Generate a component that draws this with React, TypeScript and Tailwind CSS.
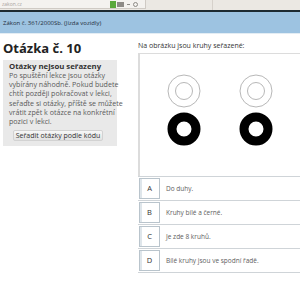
import React from "react";

const answers = [
  { l: "A", t: "Do duhy." },
  { l: "B", t: "Kruhy bílé a černé." },
  { l: "C", t: "Je zde 8 kruhů." },
  { l: "D", t: "Bílé kruhy jsou ve spodní řadě." },
];

export default function App() {
  return (
    <div className="w-[300px] h-[300px] overflow-hidden bg-white font-['Open_Sans',sans-serif] text-[#333] antialiased">
      {/* browser chrome */}
      <div className="h-[10px] bg-[#ebe8e3] flex items-stretch">
        <div className="w-[146px] h-[9px] bg-[#f4f2ef] border-b border-r border-[#cfcac4] flex items-center pl-[2px] relative">
          <span className="text-[5px] leading-none text-[#a9a49e]">zakon.cz</span>
          <div className="absolute left-[110px] top-[1px] w-[6px] h-[7px] bg-[#5aa83c]" />
          <div className="absolute left-[117px] top-[2px] w-[7px] h-[5px] bg-[#8d8a86]" />
          <div className="absolute left-[127px] top-[4px] w-[3px] h-px bg-[#8d8a86]" />
          <div className="absolute left-[133px] top-[2px] w-[5px] h-[5px] border border-[#8d8a86] rounded-full" />
        </div>
        <div className="w-[67px] border-r border-[#d6d1cb]" />
        <div className="flex-1" />
      </div>
      <div className="h-[2px] bg-[#1d2a31]" />
      <div className="h-[21px] bg-[#9dc3e1] flex items-center px-[3px]">
        <span className="text-[6px] text-[#1f2d3a] leading-none">Zákon č. 361/2000Sb. (Jízda vozidly)</span>
      </div>
      <div className="h-px bg-[#e3edf4]" />

      <div className="flex">
        {/* left column */}
        <div className="w-[114px] ml-[3px] flex flex-col">
          <h1 className="mt-[6px] text-[13px] leading-[16px] font-bold text-[#222]">Otázka č. 10</h1>
          <div className="mt-[4px] h-[86px] bg-[#e9e9e9] px-[6px] pt-[1px] flex flex-col">
            <div className="text-[7.8px] leading-[10px] font-bold text-[#333]">Otázky nejsou seřazeny</div>
            <div className="text-[7.1px] leading-[9.2px] text-[#5a5a5a] whitespace-nowrap">
              <div>Po spuštění lekce jsou otázky</div>
              <div>vybírány náhodně. Pokud budete</div>
              <div>chtít později pokračovat v lekci,</div>
              <div>seřaďte si otázky, příště se můžete</div>
              <div>vrátit zpět k otázce na konkrétní</div>
              <div>pozici v lekci.</div>
            </div>
            <button className="mt-[4px] ml-[4px] w-[90px] h-[11px] bg-gradient-to-b from-[#f7f7f7] to-[#e2e2e2] border border-[#d2d2d2] rounded-[2px] text-[7px] leading-none text-[#333] flex items-center justify-center">
              Seřadit otázky podle kódu
            </button>
          </div>
        </div>

        {/* right column */}
        <div className="ml-[21px] flex-1 flex flex-col">
          <div className="mt-[7px] text-[7px] leading-[10px] text-[#333]">Na obrázku jsou kruhy seřazené:</div>
          <div className="mt-[2px] h-[123px] border-t border-l-2 border-[#dcdcdc] bg-white">
            <svg width="162" height="122" viewBox="0 0 162 122">
              <circle cx="44" cy="37" r="16" fill="none" stroke="#a5a5a5" strokeWidth="0.8" />
              <circle cx="44" cy="37" r="8.5" fill="none" stroke="#a5a5a5" strokeWidth="0.8" />
              <circle cx="116" cy="37" r="16" fill="none" stroke="#a5a5a5" strokeWidth="0.8" />
              <circle cx="116" cy="37" r="8.5" fill="none" stroke="#a5a5a5" strokeWidth="0.8" />
              <circle cx="44" cy="75" r="12" fill="none" stroke="#000" strokeWidth="9" />
              <circle cx="116" cy="75" r="12" fill="none" stroke="#000" strokeWidth="9" />
            </svg>
          </div>
          <div className="flex flex-col border-b border-[#cfd4d8]">
            {answers.map((a) => (
              <div key={a.l} className="h-[24px] border-t border-[#cfd4d8] flex items-center">
                <div className="ml-[1px] w-[21px] h-[21px] bg-white border border-[#b9c4cc] shadow-[inset_2px_0_0_#dfe6eb] flex items-center justify-center text-[7.5px] text-[#333]">
                  {a.l}
                </div>
                <span className="ml-[6px] text-[6.5px] text-[#606060]">{a.t}</span>
              </div>
            ))}
          </div>
        </div>
      </div>
    </div>
  );
}
